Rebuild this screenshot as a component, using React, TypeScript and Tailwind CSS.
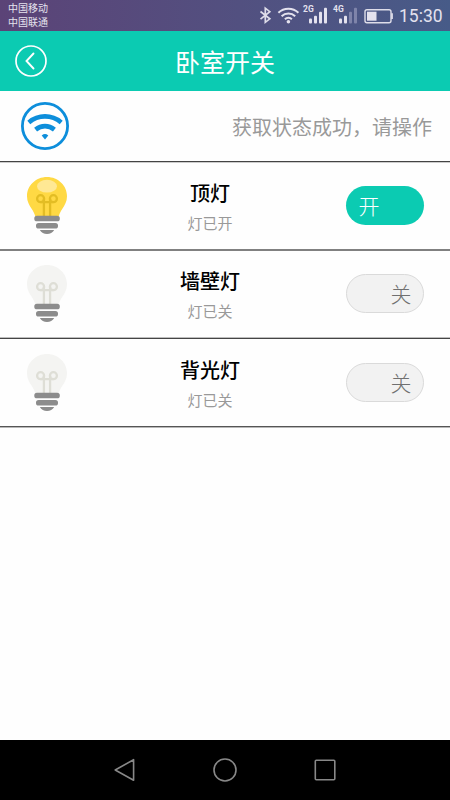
import React from 'react';

type Lamp = { name: string; on: boolean; row: string; line: string };

const lamps: Lamp[] = [
  { name: '顶灯', on: true, row: 'h-[86px]', line: 'border-t-[#808080] border-b-[#808080]' },
  { name: '墙壁灯', on: false, row: 'h-[86px] pt-[0.400px]', line: 'border-t-[#bdbdbd] border-b-[#444444]' },
  { name: '背光灯', on: false, row: 'h-[87px] pt-[0.700px]', line: 'border-t-[#555555] border-b-[#b8b8b8]' },
];

function Divider({ tone }: { tone: string }) {
  return <div className={`h-[2px] shrink-0 border-t border-b ${tone}`} />;
}

function Bulb({ on }: { on: boolean }) {
  const filament = on ? '#e3bd24' : '#deded6';
  return (
    <svg width="40" height="57" viewBox="0 0 40 57" fill="none">
      <path
        d="M20 0C8.800 0 0 8.600 0 19.300c0 5.200 2.200 8.800 4.600 12.500C6.200 34.300 7.600 36.500 8.200 39.500h23.600c.6-3 2-5.200 3.600-7.700 2.400-3.700 4.600-7.300 4.600-12.500C40 8.600 31.200 0 20 0Z"
        fill={on ? '#ffd944' : '#f4f4f2'}
      />
      {on && <ellipse cx="20" cy="9.200" rx="10" ry="6.400" fill="#ffe894" />}
      <g stroke={filament} strokeWidth="2.300">
        <circle cx="13.600" cy="21.700" r="3.500" />
        <circle cx="26.400" cy="21.700" r="3.500" />
        <path d="M13.600 25.200h12.800M16.900 21.700v17.300M23.100 21.700v17.300" />
      </g>
      <rect x="7.300" y="38.700" width="25.500" height="5.600" rx="2.600" fill="#8c8c8c" />
      <rect x="9" y="45.900" width="22" height="5.600" rx="2.600" fill="#8c8c8c" />
      <path d="M12.800 53h14.400c-1.600 2.500-4 4-7.200 4s-5.600-1.500-7.200-4Z" fill="#8c8c8c" />
    </svg>
  );
}

function Toggle({ on }: { on: boolean }) {
  return on ? (
    <div className="flex h-[39px] w-[78px] items-center rounded-full bg-[#0bcbb2] pl-[13px] text-[21px] leading-none font-light text-white">
      开
    </div>
  ) : (
    <div className="flex h-[39px] w-[78px] items-center justify-end rounded-full border-[1.500px] border-[#dadada] bg-[#f2f2f2] pr-[11px] text-[21px] leading-none font-light text-[#707070]">
      关
    </div>
  );
}

function StatusBar() {
  return (
    <header className="flex h-[31px] shrink-0 items-center justify-between bg-linear-to-r from-[#5b4377] to-[#475b88] text-[#e4e2ee]">
      <div className="-mt-[2px] pl-[8px] text-[10px] leading-[14px]">
        <div>中国移动</div>
        <div>中国联通</div>
      </div>
      <div className="flex h-full">
        <svg width="142" height="31" viewBox="254 0 142 31" fill="none">
          <path d="M260.500 11.500l9.300 7.300-4.500 3.500V8.200l4.500 3.500-9.300 7.500" stroke="#dedde9" strokeWidth="1.700" />
          <g stroke="#e4e2ee" strokeWidth="2">
            <path d="M278.400 12.800a14.600 14.600 0 0 1 20 0" />
            <path d="M281.600 16.200a9.800 9.800 0 0 1 13.600 0" />
            <path d="M284.900 19.300a5 5 0 0 1 7 0" />
          </g>
          <circle cx="288.400" cy="21.700" r="1.800" fill="#e4e2ee" />
          <g fill="#e4e2ee" fontFamily="Roboto, sans-serif" fontSize="8.500" fontWeight="700">
            <text x="303" y="11.700">2G</text>
            <text x="333" y="11.700">4G</text>
          </g>
          <g fill="#e4e2ee">
            <rect x="309" y="18.500" width="3" height="5" rx="1" />
            <rect x="314" y="15.700" width="3" height="7.800" rx="1" />
            <rect x="319" y="11.700" width="3" height="11.800" rx="1" />
            <rect x="324" y="7.800" width="3" height="15.700" rx="1" />
            <rect x="339" y="18.500" width="3" height="5" rx="1" />
            <rect x="344" y="15.700" width="3" height="7.800" rx="1" />
          </g>
          <g fill="#7f84aa">
            <rect x="349" y="11.700" width="3" height="11.800" rx="1" />
            <rect x="354" y="7.800" width="3" height="15.700" rx="1" />
          </g>
          <rect x="365" y="9.700" width="26" height="13" rx="2" stroke="#dedde9" strokeWidth="1.400" />
          <rect x="367" y="11.700" width="9.500" height="9" fill="#e4e2ee" />
          <path d="M392 13.300v5.800" stroke="#dedde9" strokeWidth="1.800" />
        </svg>
        <span className="w-[54px] pl-[3px] font-['Roboto'] text-[17.500px] leading-[32px]">15:30</span>
      </div>
    </header>
  );
}

export default function App() {
  return (
    <div className="flex h-[800px] w-[450px] flex-col overflow-hidden bg-[#fefefe] font-['Noto_Sans_CJK_SC',sans-serif]">
      <StatusBar />
      <div className="grid h-[60px] shrink-0 grid-cols-[60px_1fr_60px] items-center bg-[#0bcbb2] text-white">
        <svg className="ml-[15px]" width="32" height="32" viewBox="0 0 32 32" fill="none" stroke="currentColor">
          <circle cx="16" cy="16" r="15" strokeWidth="1.700" />
          <path d="M18.500 8.500L11.500 16l7 7.500" strokeWidth="1.900" strokeLinecap="round" />
        </svg>
        <h1 className="text-center text-[25px] leading-[60px]">卧室开关</h1>
      </div>
      <section className="flex h-[70px] shrink-0 items-center justify-between pr-[18px] pl-[21px]">
        <svg width="48" height="48" viewBox="0 0 48 48" fill="none" stroke="#0d8edb">
          <circle cx="24" cy="24" r="22.600" strokeWidth="2.800" />
          <path d="M7.800 20.400c9.500-8 22.900-8 32.400 0" strokeWidth="4.600" />
          <path d="M14.600 27.600c5.600-4.600 13.200-4.600 18.800 0" strokeWidth="4.600" />
          <path d="M20.700 33.400q3.300-2.600 6.600 0L24 37.400Z" fill="#0d8edb" stroke="none" />
        </svg>
        <p className="mt-[2px] text-[20px] leading-[30px] text-[#999999]">获取状态成功，请操作</p>
      </section>
      <Divider tone="border-t-[#444444] border-b-[#cccccc]" />
      <main>
        {lamps.map((lamp) => (
          <React.Fragment key={lamp.name}>
            <div className={`grid grid-cols-[100px_220px_1fr] ${lamp.row}`}>
              <div className="pt-[14px] pl-[27px]">
                <Bulb on={lamp.on} />
              </div>
              <div className="pt-[15px] text-center">
                <div className="text-[20px] leading-[30px] font-medium text-black">{lamp.name}</div>
                <div className="mt-[4px] text-[15px] leading-[22px] text-[#999999]">
                  {lamp.on ? '灯已开' : '灯已关'}
                </div>
              </div>
              <div className="pt-[23px] pl-[25.500px]">
                <Toggle on={lamp.on} />
              </div>
            </div>
            <Divider tone={lamp.line} />
          </React.Fragment>
        ))}
      </main>
      <div className="flex-1" />
      <nav className="flex h-[60px] shrink-0 items-center justify-center gap-[76px] bg-black text-[#888888]">
        <svg width="24" height="24" viewBox="0 0 24 24" fill="none" stroke="currentColor" strokeWidth="1.600" strokeLinejoin="round">
          <path d="M2.200 12L20.600 1.700v20.600Z" />
        </svg>
        <svg width="24" height="24" viewBox="0 0 24 24" fill="none" stroke="currentColor" strokeWidth="1.600">
          <circle cx="12" cy="12" r="11" />
        </svg>
        <svg width="24" height="24" viewBox="0 0 24 24" fill="none" stroke="currentColor" strokeWidth="1.600">
          <rect x="2.300" y="2.300" width="19.500" height="19.500" rx="1" />
        </svg>
      </nav>
    </div>
  );
}
